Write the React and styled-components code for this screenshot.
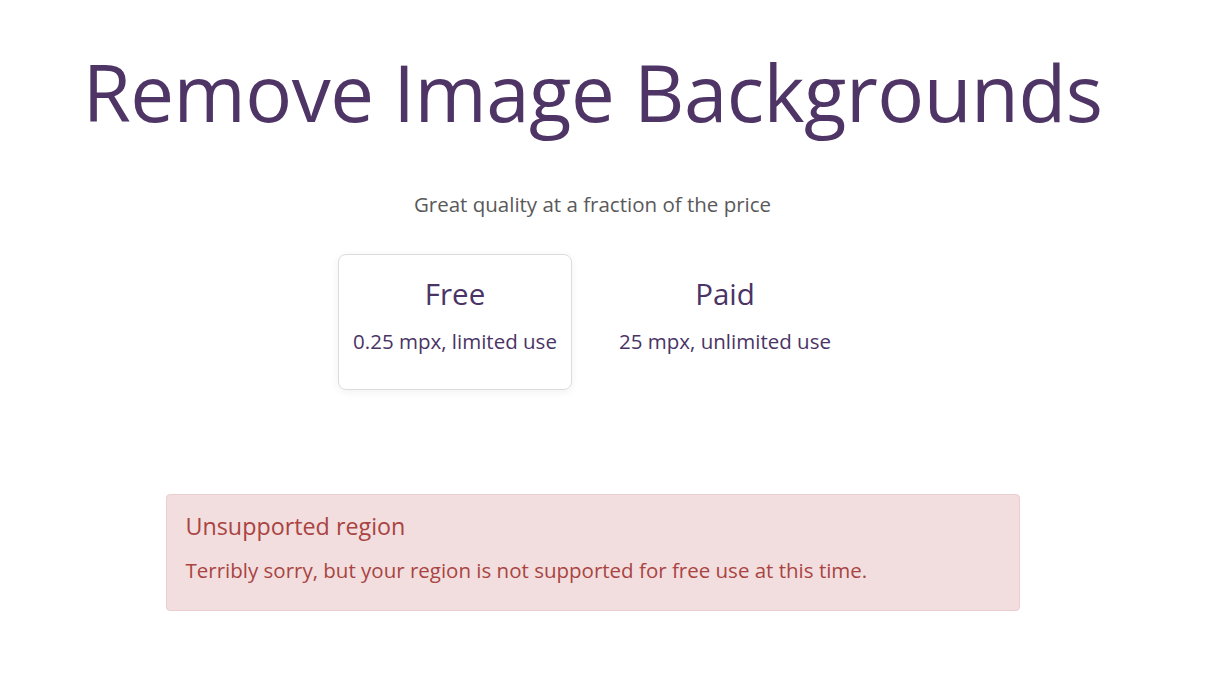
import React from "react";
import styled, { createGlobalStyle } from "styled-components";

const Global = createGlobalStyle`
  html, body { margin: 0; padding: 0; background: #fff; }
  body { font-family: "Open Sans", "Noto Sans", sans-serif; color: #333; }
`;

const Page = styled.main`
  width: 1185px;
  display: flex;
  flex-direction: column;
  align-items: center;
`;

const Title = styled.h1`
  margin: 42px 0 0;
  font-size: 78px;
  font-weight: 400;
  line-height: 100px;
  color: #4e3566;
  letter-spacing: -0.5px;
`;

const Lead = styled.p`
  margin: 49px 0 0;
  font-size: 20.5px;
  line-height: 26px;
  color: #595959;
`;

const Plans = styled.div`
  margin-top: 37px;
  padding-right: 5px;
  display: flex;
  gap: 36px;
`;

const Plan = styled.div`
  width: 234px;
  height: 136px;
  box-sizing: border-box;
  padding-top: 19px;
  display: flex;
  flex-direction: column;
  align-items: center;
  border-radius: 8px;
  border: 1px solid ${(p) => (p.$active ? "#dcdcdc" : "transparent")};
  box-shadow: ${(p) => (p.$active ? "0 2px 8px rgba(0,0,0,0.06)" : "none")};
  color: #4a3466;
`;

const PlanName = styled.div`
  font-size: 29.5px;
  line-height: 40px;
`;

const PlanDesc = styled.div`
  margin-top: 13px;
  font-size: 20.5px;
  line-height: 28px;
`;

const Alert = styled.div`
  margin-top: 104px;
  width: 854px;
  height: 117px;
  box-sizing: border-box;
  padding: 16px 19px;
  background: #f2dede;
  border: 1px solid #ebccd1;
  border-radius: 4px;
  color: #a94442;
`;

const AlertTitle = styled.div`
  font-size: 23.3px;
  line-height: 30px;
`;

const AlertText = styled.div`
  margin-top: 15px;
  font-size: 20.5px;
  line-height: 28px;
`;

export default function App() {
  return (
    <>
      <Global />
      <Page>
        <Title>Remove Image Backgrounds</Title>
        <Lead>Great quality at a fraction of the price</Lead>
        <Plans>
          <Plan $active>
            <PlanName>Free</PlanName>
            <PlanDesc>0.25 mpx, limited use</PlanDesc>
          </Plan>
          <Plan>
            <PlanName>Paid</PlanName>
            <PlanDesc>25 mpx, unlimited use</PlanDesc>
          </Plan>
        </Plans>
        <Alert>
          <AlertTitle>Unsupported region</AlertTitle>
          <AlertText>Terribly sorry, but your region is not supported for free use at this time.</AlertText>
        </Alert>
      </Page>
    </>
  );
}
